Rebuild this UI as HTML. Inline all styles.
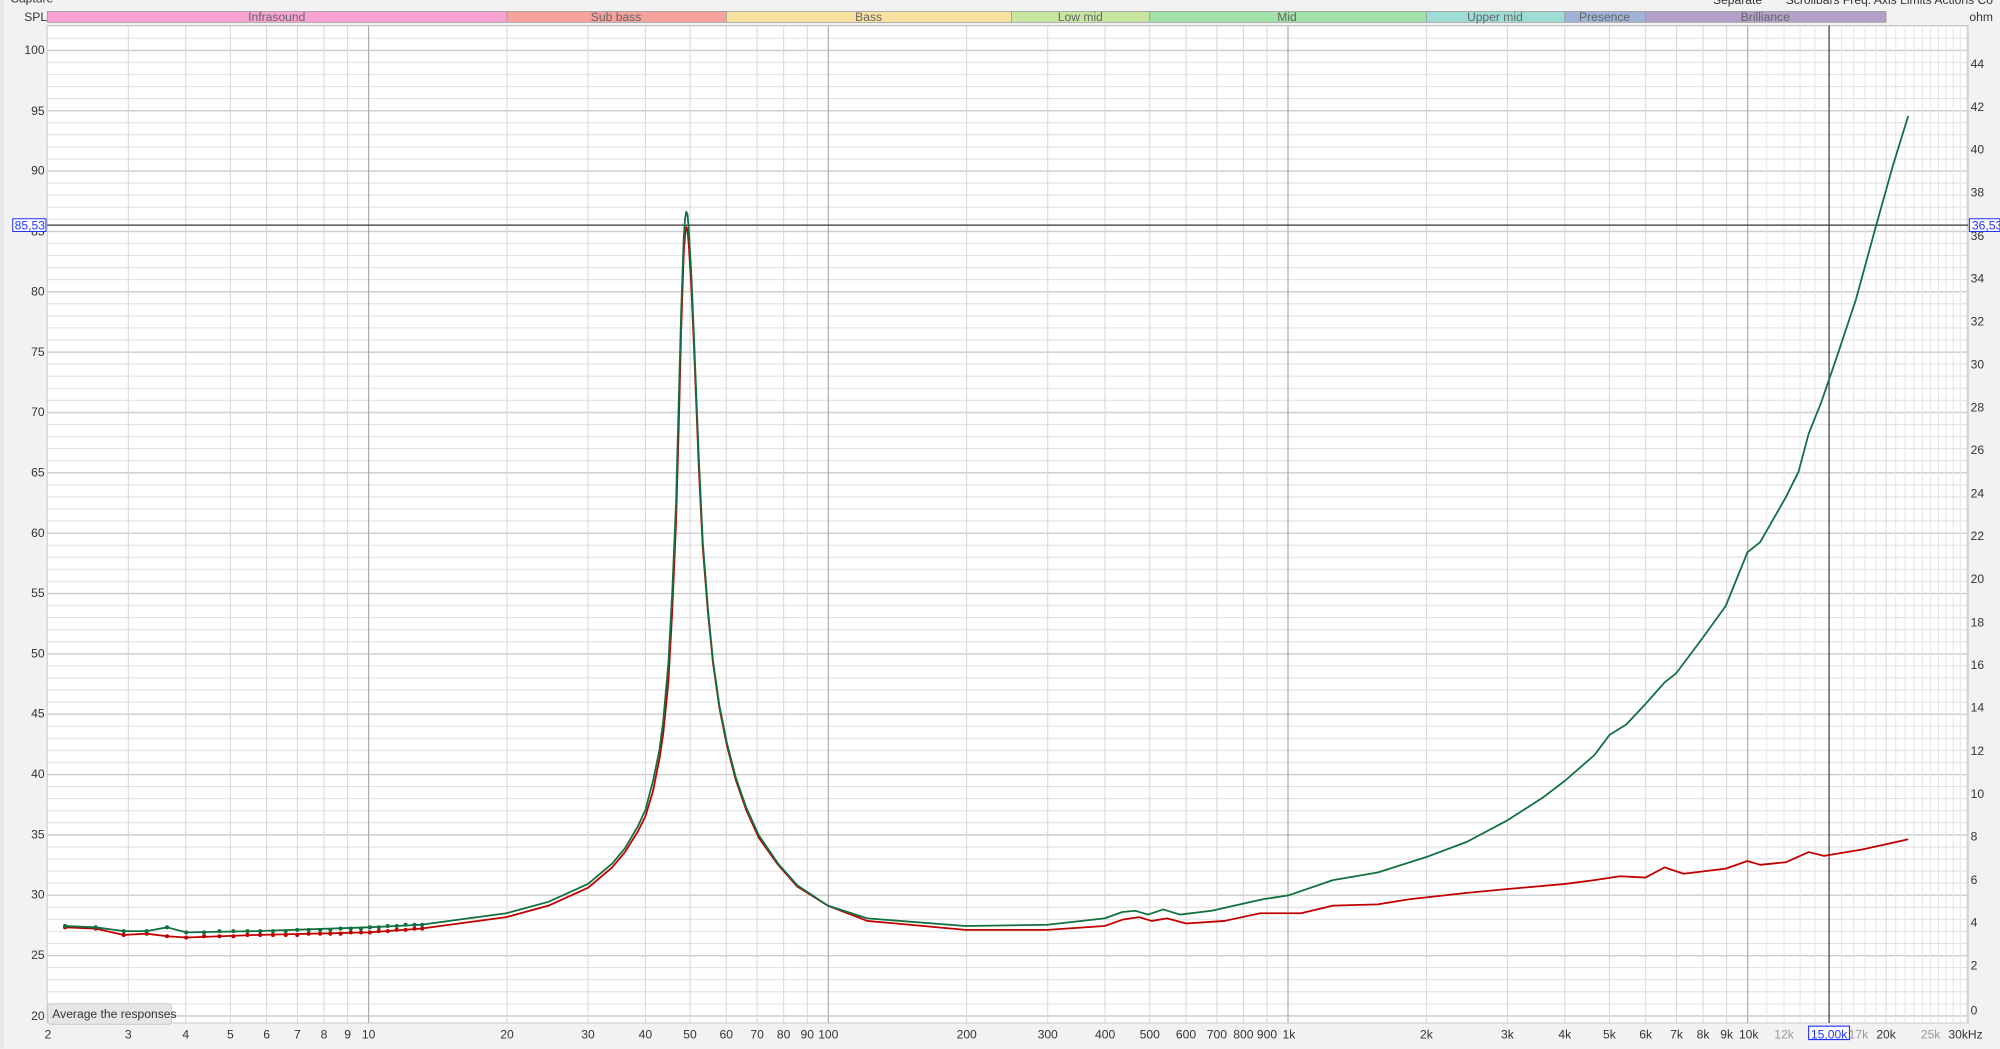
<!DOCTYPE html>
<html><head><meta charset="utf-8"><style>
html,body{margin:0;padding:0;background:#f2f2f2;overflow:hidden}
svg{display:block}
text{font-family:"Liberation Sans",sans-serif;font-size:9.5px;fill:#333}
</style></head><body>
<svg width="2000" height="1049" viewBox="0 0 1568 822.4" preserveAspectRatio="none" xmlns="http://www.w3.org/2000/svg">
<defs>
<pattern id="h1" x="0" y="39" width="10" height="9.4625" patternUnits="userSpaceOnUse"><rect width="10" height="0.9" fill="#e2e2e2"/></pattern>
<pattern id="h5" x="0" y="39" width="10" height="47.3125" patternUnits="userSpaceOnUse"><rect width="10" height="1" fill="#cbcbcb"/></pattern>
</defs>
<rect width="1568" height="822.4" fill="#f2f2f2"/>
<rect x="0" y="0" width="3" height="822" fill="#e8e8e8"/>
<text x="8" y="2" font-size="8">Capture</text>
<text x="1343" y="3">Separate</text>
<text x="1400" y="3">Scrollbars  Freq. Axis  Limits  Actions  Co</text>
<rect x="37" y="20" width="1506" height="782" fill="#fff"/>
<rect x="37" y="20" width="1506" height="782" fill="url(#h1)"/>
<rect x="37" y="20" width="1506" height="782" fill="url(#h5)"/>
<g stroke="#d8d8d8" stroke-width="0.8">
<path d="M100.6 20V802M145.6 20V802M180.6 20V802M209 20V802M233.2 20V802M254 20V802M272.5 20V802M397.5 20V802M461 20V802M506 20V802M541 20V802M569.4 20V802M593.6 20V802M614.4 20V802M632.9 20V802M757.9 20V802M821.4 20V802M866.4 20V802M901.4 20V802M929.8 20V802M954 20V802M974.8 20V802M993.3 20V802M1118.3 20V802M1181.8 20V802M1226.8 20V802M1261.8 20V802M1290.2 20V802M1314.4 20V802M1335.2 20V802M1353.7 20V802M1478.7 20V802M1542.2 20V802"/>
<path stroke="#e6e6e6" d="M1385.1 20V802M1398.7 20V802M1411.3 20V802M1422.9 20V802M1443.8 20V802M1453.3 20V802M1462.2 20V802M1470.7 20V802M1486.3 20V802M1493.6 20V802M1500.6 20V802M1507.2 20V802M1513.6 20V802M1519.8 20V802M1525.7 20V802M1531.4 20V802M1536.9 20V802"/>
</g>
<g stroke="#a8a8a8" stroke-width="0.9"><path d="M289 20V802M649.4 20V802M1009.8 20V802M1370.2 20V802"/></g>
<rect x="37" y="20" width="1506" height="782" fill="none" stroke="#c8c8c8" stroke-width="0.8"/>
<path d="M37 176.5H1543M1434 20V802" stroke="#333" stroke-width="0.9"/>
<g stroke="#999" stroke-width="0.6">
<rect x="37" y="9" width="360.5" height="8.5" fill="#f9a3d3"/>
<rect x="397.5" y="9" width="172" height="8.5" fill="#f6a19c"/>
<rect x="569.5" y="9" width="223.5" height="8.5" fill="#f7e2a0"/>
<rect x="793" y="9" width="108.4" height="8.5" fill="#c8e6a0"/>
<rect x="901.4" y="9" width="216.9" height="8.5" fill="#a0e2a8"/>
<rect x="1118.3" y="9" width="108.5" height="8.5" fill="#a0dcd6"/>
<rect x="1226.8" y="9" width="63.4" height="8.5" fill="#9fb2d8"/>
<rect x="1290.2" y="9" width="188.5" height="8.5" fill="#b3a0c8"/>
</g>
<g font-size="9" text-anchor="middle">
<text x="217" y="16.3" style="fill:#666">Infrasound</text>
<text x="483" y="16.3" style="fill:#666">Sub bass</text>
<text x="681" y="16.3" style="fill:#666">Bass</text>
<text x="847" y="16.3" style="fill:#666">Low mid</text>
<text x="1009" y="16.3" style="fill:#666">Mid</text>
<text x="1172" y="16.3" style="fill:#666">Upper mid</text>
<text x="1258" y="16.3" style="fill:#666">Presence</text>
<text x="1384" y="16.3" style="fill:#666">Brilliance</text>
</g>
<text x="19" y="16.5">SPL</text>
<text x="1544" y="16.5">ohm</text>
<g text-anchor="end">
<text x="35" y="42.5">100</text><text x="35" y="90">95</text><text x="35" y="137">90</text><text x="35" y="184.5">85</text><text x="35" y="231.5">80</text><text x="35" y="279">75</text><text x="35" y="326">70</text><text x="35" y="373.5">65</text><text x="35" y="421">60</text><text x="35" y="468">55</text><text x="35" y="515.5">50</text><text x="35" y="562.5">45</text><text x="35" y="610">40</text><text x="35" y="657.5">35</text><text x="35" y="704.5">30</text><text x="35" y="752">25</text><text x="35" y="799.5">20</text>
</g>
<g>
<text x="1545" y="53.5">44</text><text x="1545" y="87">42</text><text x="1545" y="120.5">40</text><text x="1545" y="154">38</text><text x="1545" y="188">36</text><text x="1545" y="221.5">34</text><text x="1545" y="255">32</text><text x="1545" y="289">30</text><text x="1545" y="322.5">28</text><text x="1545" y="356">26</text><text x="1545" y="390">24</text><text x="1545" y="423.5">22</text><text x="1545" y="457">20</text><text x="1545" y="491">18</text><text x="1545" y="524.5">16</text><text x="1545" y="558">14</text><text x="1545" y="592">12</text><text x="1545" y="625.5">10</text><text x="1545" y="659">8</text><text x="1545" y="693">6</text><text x="1545" y="726.5">4</text><text x="1545" y="760">2</text><text x="1545" y="795.5">0</text>
</g>
<rect x="10" y="171.5" width="26" height="10" fill="#fff" stroke="#2233ff" stroke-width="0.8"/>
<text x="11.5" y="180" style="fill:#2233ff">85,53</text>
<rect x="1544" y="171.5" width="24" height="10" fill="#fff" stroke="#2233ff" stroke-width="0.8"/>
<text x="1546" y="180" style="fill:#2233ff">36,53</text>
<g text-anchor="middle">
<text x="37.5" y="814">2</text><text x="100.6" y="814">3</text><text x="145.6" y="814">4</text><text x="180.6" y="814">5</text><text x="209" y="814">6</text><text x="233.2" y="814">7</text><text x="254" y="814">8</text><text x="272.5" y="814">9</text><text x="289" y="814">10</text>
<text x="397.5" y="814">20</text><text x="461" y="814">30</text><text x="506" y="814">40</text><text x="541" y="814">50</text><text x="569.4" y="814">60</text><text x="593.6" y="814">70</text><text x="614.4" y="814">80</text><text x="632.9" y="814">90</text><text x="649.4" y="814">100</text>
<text x="757.9" y="814">200</text><text x="821.4" y="814">300</text><text x="866.4" y="814">400</text><text x="901.4" y="814">500</text><text x="929.8" y="814">600</text><text x="954" y="814">700</text><text x="974.8" y="814">800</text><text x="993.3" y="814">900</text><text x="1010.5" y="814">1k</text>
<text x="1118.3" y="814">2k</text><text x="1181.8" y="814">3k</text><text x="1226.8" y="814">4k</text><text x="1261.8" y="814">5k</text><text x="1290.2" y="814">6k</text><text x="1314.4" y="814">7k</text><text x="1335.2" y="814">8k</text><text x="1353.7" y="814">9k</text><text x="1371" y="814">10k</text>
<text x="1398.7" y="814" style="fill:#999">12k</text><text x="1457" y="814" style="fill:#999">17k</text><text x="1478.7" y="814">20k</text><text x="1513.6" y="814" style="fill:#999">25k</text><text x="1541" y="814">30kHz</text>
</g>
<rect x="1418" y="804.5" width="32" height="10.5" fill="#fff" stroke="#2233ff" stroke-width="0.9"/>
<text x="1434" y="814" text-anchor="middle" style="fill:#2233ff">15,00k</text>
<rect x="37.5" y="787" width="97" height="16" rx="2" fill="#e6e6e6" stroke="#c8c8c8" stroke-width="0.7"/>
<text x="41" y="798" font-size="9">Average the responses</text>
<polyline fill="none" stroke="#c00000" stroke-width="1.4" stroke-linejoin="round" points="51,727 75,728 97,733 115,732 131,734 146,735 200,733 289,731 330,728 397,719 430,710 461,696 480,680 490,668 500,652 506,640 512,620 517,595 520,575 524,535 527,480 530,410 532,340 534,260 536,200 537,185 538,178 539,180 540,192 542,225 544,270 546,320 548,370 551,430 555,480 559,520 564,555 570,585 577,612 585,635 595,657 610,678 625,695 649,710 680,722 757,729 821,729 866,726 880,721 893,719 903,722 915,720 930,724 960,722 988,716 1020,716 1045,710 1080,709 1105,705 1150,700 1182,697 1227,693 1250,690 1270,687 1290,688 1305,680 1320,685 1353,681 1370,675 1380,678 1400,676 1418,668 1430,671 1460,666 1496,658"/>
<polyline fill="none" stroke="#127040" stroke-width="1.4" stroke-linejoin="round" points="51,726 75,727 97,730 115,730 131,727 146,731 200,730 289,727 330,725 397,716 430,707 461,693 480,677 490,665 500,648 506,635 512,612 517,588 520,565 524,520 527,465 530,395 532,320 534,245 536,188 537,172 538,166 539,168 540,180 542,215 544,262 546,312 548,362 551,425 555,477 559,518 564,553 570,583 577,610 585,633 595,655 610,677 625,694 649,710 680,720 757,726 821,725 866,720 880,715 890,714 900,717 912,713 925,717 950,714 990,705 1010,702 1045,690 1080,684 1118,672 1150,660 1182,643 1210,625 1227,612 1250,592 1262,576 1275,568 1290,552 1305,535 1314,528 1335,500 1353,475 1370,433 1380,425 1400,390 1410,370 1418,340 1428,315 1440,280 1455,235 1470,180 1484,130 1496,91"/>
<g fill="#c00000">
<circle cx="51" cy="727" r="1.6"/><circle cx="75" cy="728" r="1.6"/><circle cx="97" cy="733" r="1.6"/><circle cx="115" cy="732" r="1.6"/><circle cx="131" cy="734" r="1.6"/><circle cx="146" cy="735" r="1.6"/><circle cx="160" cy="734" r="1.6"/><circle cx="172" cy="734" r="1.6"/><circle cx="183" cy="734" r="1.6"/><circle cx="194" cy="733" r="1.6"/><circle cx="204" cy="733" r="1.6"/><circle cx="214" cy="733" r="1.6"/><circle cx="224" cy="733" r="1.6"/><circle cx="233" cy="733" r="1.6"/><circle cx="242" cy="732" r="1.6"/><circle cx="251" cy="732" r="1.6"/><circle cx="259" cy="732" r="1.6"/><circle cx="267" cy="732" r="1.6"/><circle cx="275" cy="731" r="1.6"/><circle cx="283" cy="731" r="1.6"/><circle cx="290" cy="731" r="1.6"/><circle cx="297" cy="730" r="1.6"/><circle cx="304" cy="730" r="1.6"/><circle cx="311" cy="729" r="1.6"/><circle cx="318" cy="729" r="1.6"/><circle cx="325" cy="728" r="1.6"/><circle cx="331" cy="728" r="1.6"/>
</g>
<g fill="#127040">
<circle cx="51" cy="726" r="1.6"/><circle cx="75" cy="727" r="1.6"/><circle cx="97" cy="730" r="1.6"/><circle cx="115" cy="730" r="1.6"/><circle cx="131" cy="727" r="1.6"/><circle cx="146" cy="731" r="1.6"/><circle cx="160" cy="731" r="1.6"/><circle cx="172" cy="730" r="1.6"/><circle cx="183" cy="730" r="1.6"/><circle cx="194" cy="730" r="1.6"/><circle cx="204" cy="730" r="1.6"/><circle cx="214" cy="730" r="1.6"/><circle cx="224" cy="730" r="1.6"/><circle cx="233" cy="729" r="1.6"/><circle cx="242" cy="729" r="1.6"/><circle cx="251" cy="729" r="1.6"/><circle cx="259" cy="729" r="1.6"/><circle cx="267" cy="728" r="1.6"/><circle cx="275" cy="728" r="1.6"/><circle cx="283" cy="728" r="1.6"/><circle cx="290" cy="727" r="1.6"/><circle cx="297" cy="727" r="1.6"/><circle cx="304" cy="726" r="1.6"/><circle cx="311" cy="726" r="1.6"/><circle cx="318" cy="725" r="1.6"/><circle cx="325" cy="725" r="1.6"/><circle cx="331" cy="725" r="1.6"/>
</g>
</svg>
</body></html>
